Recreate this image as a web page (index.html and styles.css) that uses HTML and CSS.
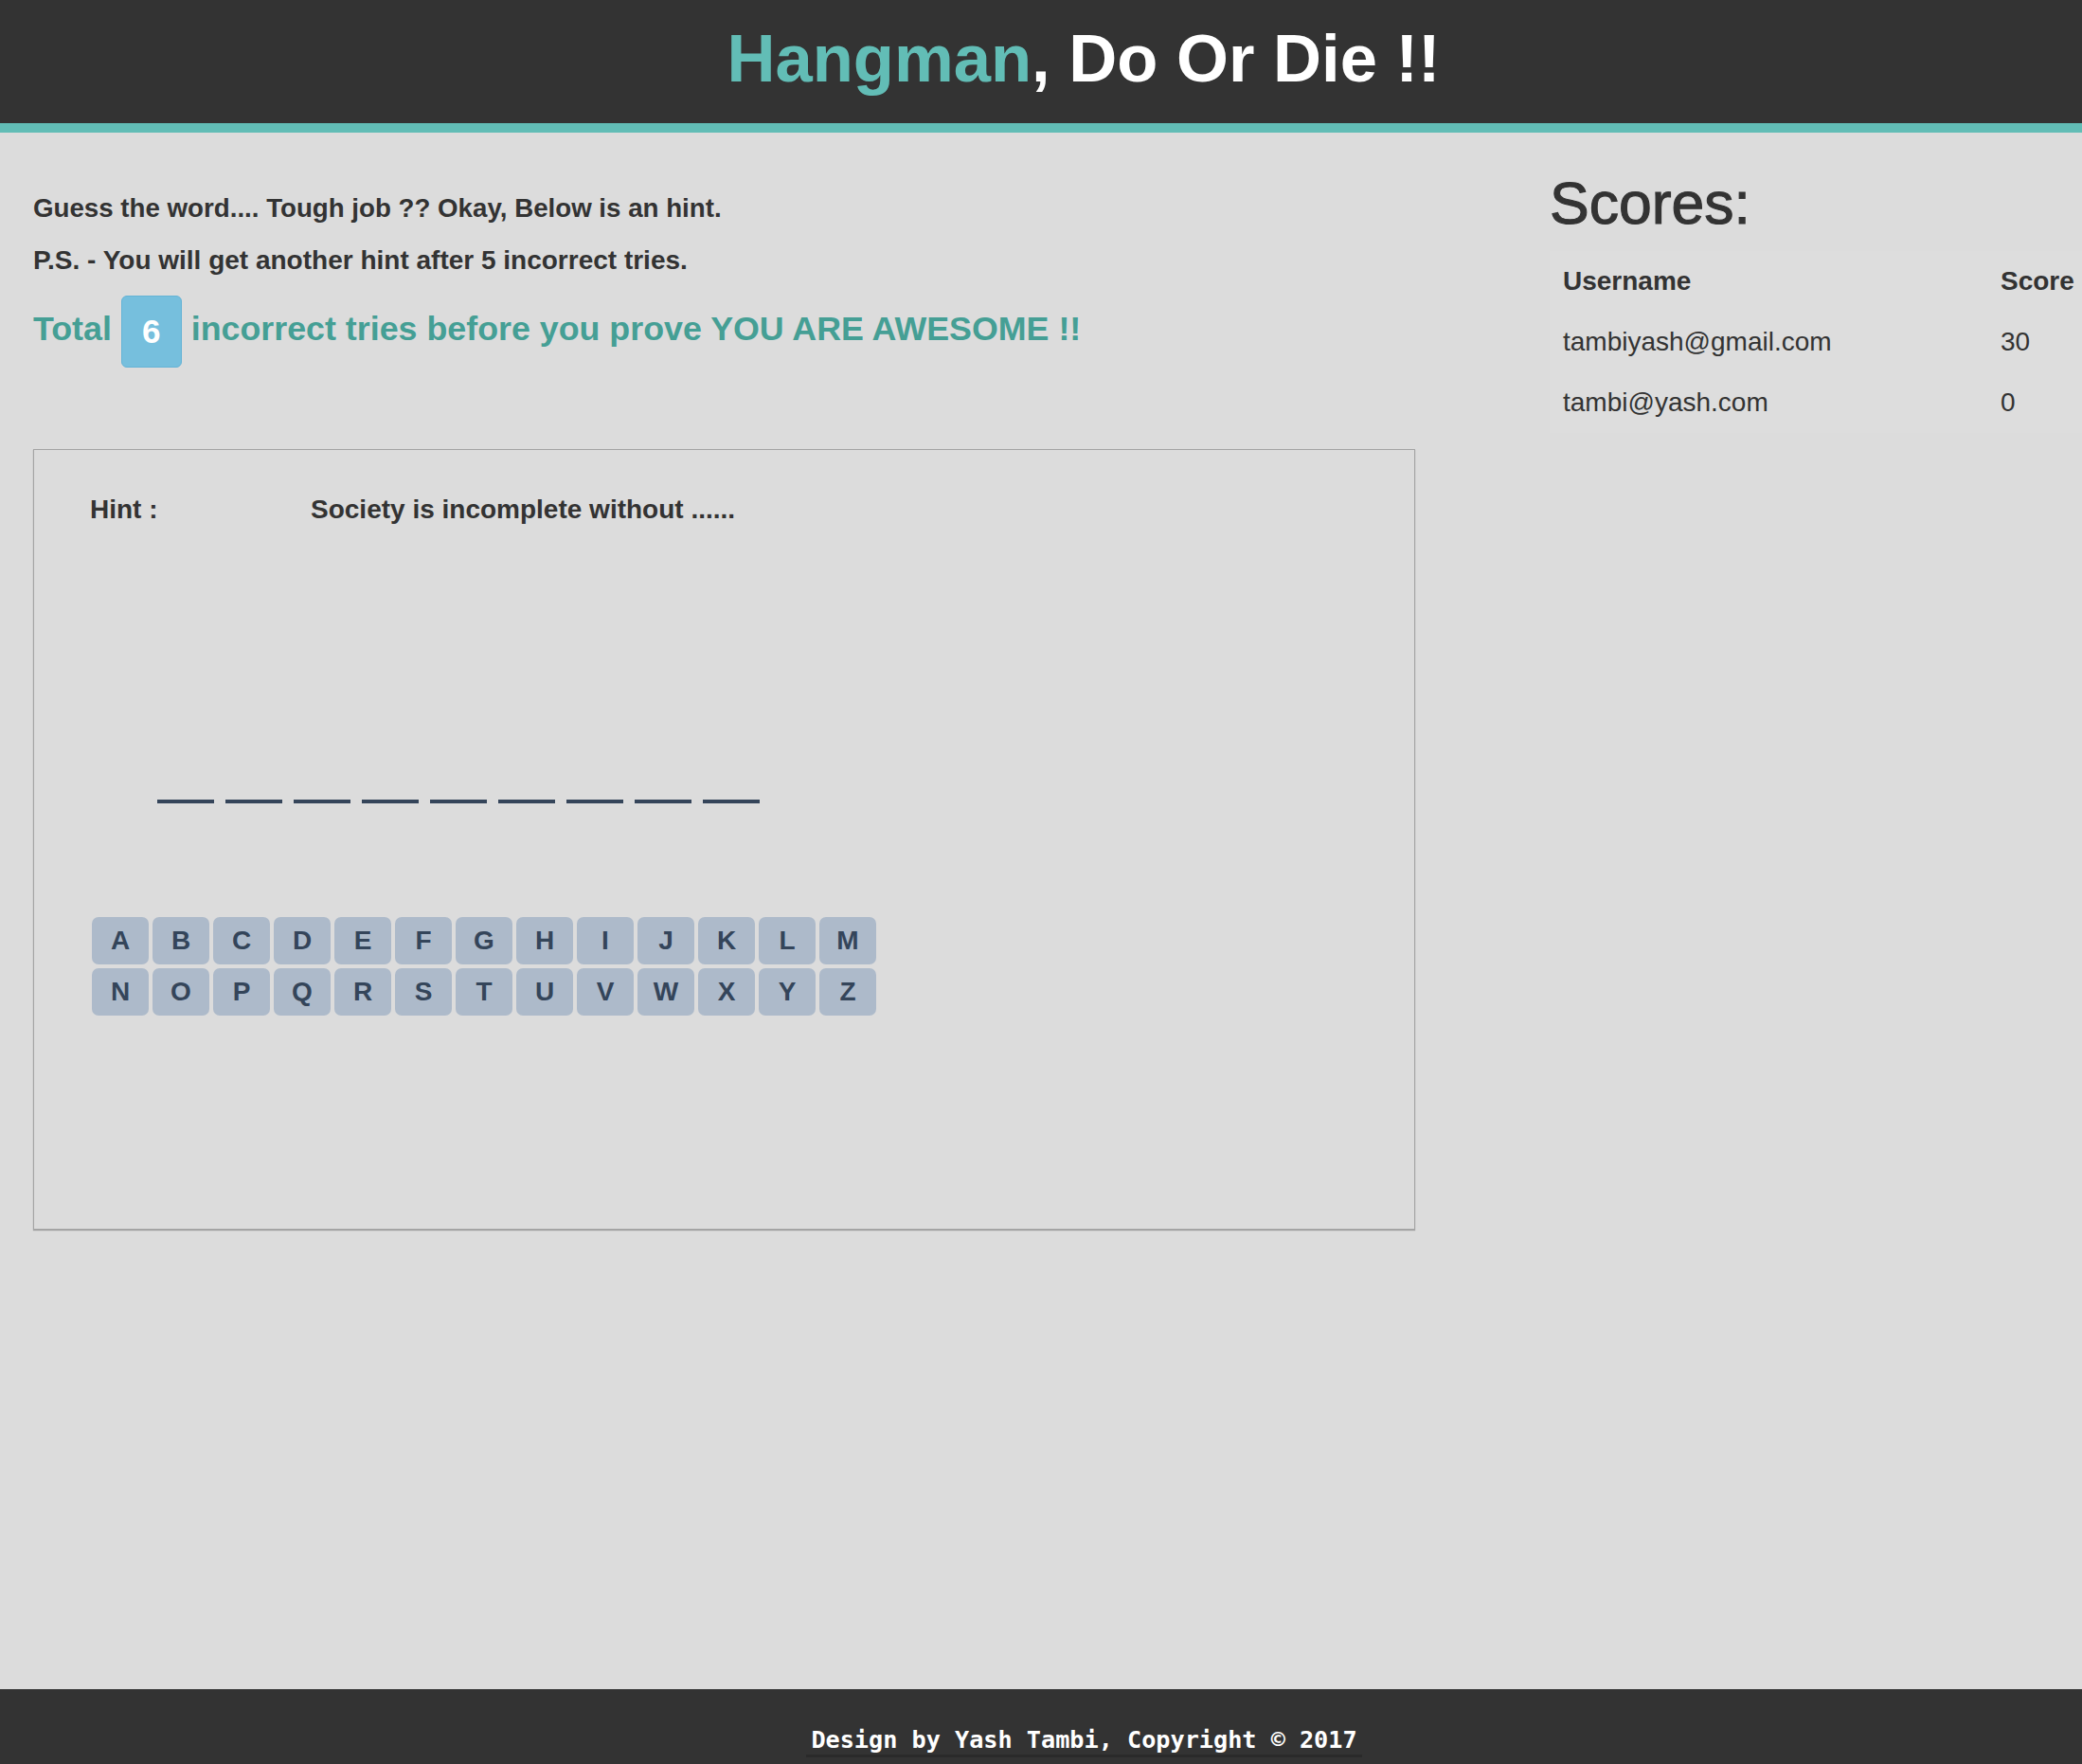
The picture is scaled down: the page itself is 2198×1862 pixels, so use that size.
FILE: index.html
```html
<!DOCTYPE html>
<html lang="en">
<head>
<meta charset="utf-8">
<title>Hangman, Do Or Die !!</title>
<link rel="stylesheet" href="styles.css">
</head>
<body>
<header class="topbar">
  <h1 class="title"><span class="accent">Hangman</span>, Do Or Die !!</h1>
</header>
<main class="page">
  <section class="game-col">
    <p class="intro">Guess the word.... Tough job ?? Okay, Below is an hint.</p>
    <p class="intro">P.S. - You will get another hint after 5 incorrect tries.</p>
    <h3 class="tries">Total <span class="badge">6</span> incorrect tries before you prove YOU ARE AWESOME !!</h3>
    <div class="board">
      <div class="hint"><span class="hint-label">Hint :</span><span class="hint-text">Society is incomplete without ......</span></div>
      <div class="word">
        <span class="slot"></span><span class="slot"></span><span class="slot"></span>
        <span class="slot"></span><span class="slot"></span><span class="slot"></span>
        <span class="slot"></span><span class="slot"></span><span class="slot"></span>
      </div>
      <div class="keys">
        <div class="key-row">
          <button class="key">A</button><button class="key">B</button><button class="key">C</button><button class="key">D</button><button class="key">E</button><button class="key">F</button><button class="key">G</button><button class="key">H</button><button class="key">I</button><button class="key">J</button><button class="key">K</button><button class="key">L</button><button class="key">M</button>
        </div>
        <div class="key-row">
          <button class="key">N</button><button class="key">O</button><button class="key">P</button><button class="key">Q</button><button class="key">R</button><button class="key">S</button><button class="key">T</button><button class="key">U</button><button class="key">V</button><button class="key">W</button><button class="key">X</button><button class="key">Y</button><button class="key">Z</button>
        </div>
      </div>
    </div>
  </section>
  <aside class="scores-col">
    <h2 class="scores-title">Scores:</h2>
    <table class="scores">
      <thead>
        <tr><th class="c-user">Username</th><th class="c-score">Score</th></tr>
      </thead>
      <tbody>
        <tr><td class="c-user">tambiyash@gmail.com</td><td class="c-score">30</td></tr>
        <tr><td class="c-user">tambi@yash.com</td><td class="c-score">0</td></tr>
      </tbody>
    </table>
  </aside>
</main>
<footer class="footer">
  <span class="credit">Design by Yash Tambi, Copyright © 2017</span>
</footer>
</body>
</html>
```

FILE: styles.css
```css
* { box-sizing: border-box; }

html, body { margin: 0; padding: 0; }

body {
  min-height: 100vh;
  display: flex;
  flex-direction: column;
  background: #dcdcdc;
  color: #333333;
  font-family: "Liberation Sans", Arial, Helvetica, sans-serif;
}

.topbar {
  height: 140px;
  background: #333333;
  border-bottom: 10px solid #62bdb6;
  display: flex;
  align-items: center;
  justify-content: center;
  padding-left: 90px;
  padding-bottom: 6px;
}

.title {
  margin: 0;
  font-size: 70.6px;
  line-height: 70px;
  font-weight: 700;
  color: #ffffff;
}

.accent { color: #62bdb6; }

.page {
  flex: 1;
  display: grid;
  grid-template-columns: 1459px 1fr;
  column-gap: 140px;
  padding-left: 35px;
}

.intro {
  margin: 17px 0 0;
  font-size: 28px;
  line-height: 38px;
  font-weight: 700;
}

.intro:first-child {
  margin-top: 61px;
  font-size: 27.7px;
}

.tries {
  margin: 18px 0 0;
  font-size: 35.8px;
  line-height: 38px;
  font-weight: 700;
  color: #459f95;
}

.badge {
  display: inline-block;
  vertical-align: middle;
  width: 64px;
  height: 76px;
  line-height: 74px;
  text-align: center;
  color: #ffffff;
  background: #76bfdd;
  border: 1px solid #64b3d6;
  border-radius: 6px;
  font-size: 35px;
}

.board {
  margin-top: 86px;
  height: 824px;
  border: 1px solid #a4a4a4;
  box-shadow: 0 1px 1px rgba(0, 0, 0, 0.25);
  padding: 44px 0 0 59px;
}

.hint {
  display: flex;
  font-size: 28px;
  line-height: 38px;
  font-weight: 700;
}

.hint-label { width: 233px; }

.word {
  display: flex;
  gap: 12px;
  margin: 287px 0 0 71px;
}

.slot {
  display: block;
  width: 60px;
  height: 4px;
  background: #35455a;
}

.keys {
  margin: 120px 0 0 2px;
  display: flex;
  flex-direction: column;
  gap: 4px;
}

.key-row {
  display: flex;
  gap: 4px;
}

.key {
  width: 60px;
  height: 50px;
  padding: 0;
  border: none;
  border-radius: 7px;
  background: #adbaca;
  color: #34455a;
  font-family: "Liberation Sans", Arial, Helvetica, sans-serif;
  font-size: 28px;
  font-weight: 700;
  line-height: 50px;
  text-align: center;
}

.scores-col { padding-left: 2px; }

.scores-title {
  margin: 41px 0 0;
  font-size: 62.5px;
  line-height: 66px;
  font-weight: 400;
  -webkit-text-stroke: 1.1px #333333;
}

.scores {
  margin-top: 18px;
  width: 562px;
  table-layout: fixed;
  border-collapse: collapse;
  font-size: 28px;
  line-height: 30px;
}

.scores th,
.scores td {
  padding: 17px 14px;
  text-align: left;
  background: #dddddd;
  white-space: nowrap;
}

.scores th { font-weight: 700; }

.scores td { font-weight: 400; }

.c-user { width: 462px; }

.c-score { width: 100px; }

.footer {
  height: 79px;
  background: #333333;
  display: flex;
  justify-content: center;
  align-items: flex-start;
  padding: 40px 0 0 91px;
}

.credit {
  font-family: "DejaVu Sans Mono", "Liberation Mono", monospace;
  font-size: 25.2px;
  line-height: 28px;
  font-weight: 700;
  color: #ffffff;
  padding: 0 5px 1px;
  border-bottom: 3px solid #2a2a2a;
}
```
